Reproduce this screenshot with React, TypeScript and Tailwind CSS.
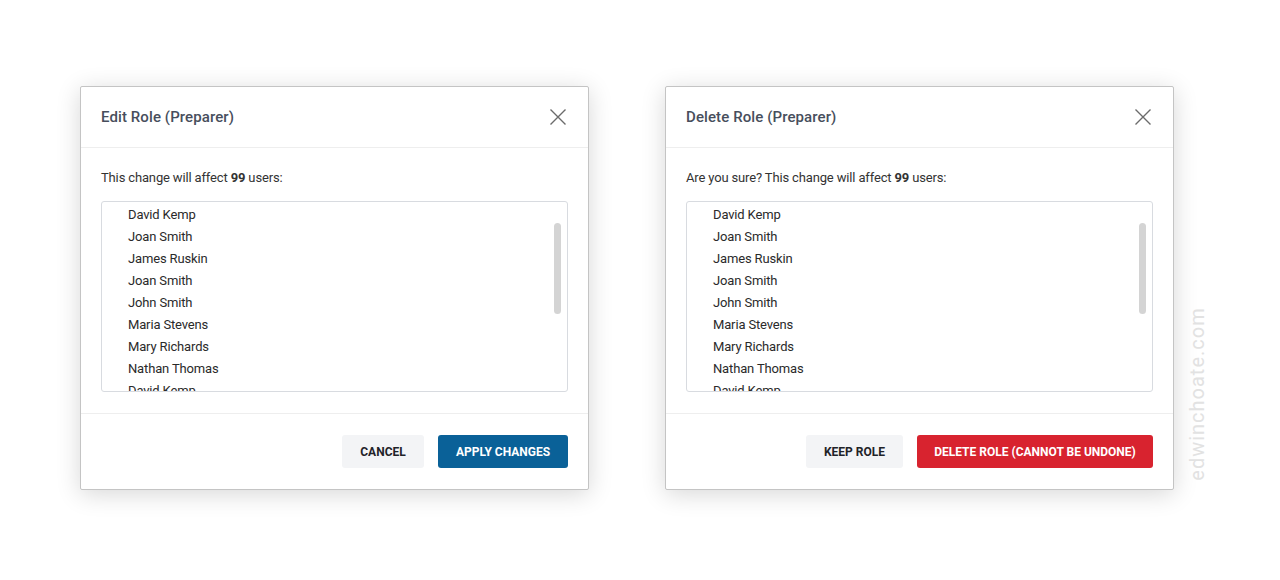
import React from "react";

const names = [
  "David Kemp",
  "Joan Smith",
  "James Ruskin",
  "Joan Smith",
  "John Smith",
  "Maria Stevens",
  "Mary Richards",
  "Nathan Thomas",
  "David Kemp",
];

function CloseIcon() {
  return (
    <svg width="18" height="18" viewBox="0 0 18 18" fill="none">
      <path d="M1.5 1.5 L16.5 16.5 M16.5 1.5 L1.5 16.5" stroke="#6b6b6b" strokeWidth="1.4" />
    </svg>
  );
}

function Dialog({
  title,
  prefix,
  secondary,
  primary,
  primaryClass,
  secondaryWidth,
  primaryWidth,
}: {
  title: string;
  prefix: string;
  secondary: string;
  primary: string;
  primaryClass: string;
  secondaryWidth: string;
  primaryWidth: string;
}) {
  return (
    <div className="w-[509px] h-[404px] bg-white border border-[#c4c4c4] rounded-[2px] shadow-[0_4px_24px_rgba(0,0,0,0.16)] flex flex-col">
      <div className="h-[61px] flex items-center justify-between pl-5 pr-[21px] border-b border-[#eeeeee]">
        <h2 className="text-[15px] font-medium text-[#474e5c] tracking-[0.1px]">{title}</h2>
        <CloseIcon />
      </div>
      <div className="px-5 pt-[21px] flex-1 border-b border-[#eeeeee]">
        <p className="text-[13px] text-[#333] leading-[17px] tracking-[-0.15px]">
          {prefix}
          <span className="font-bold">99</span> users:
        </p>
        <div className="relative mt-[15px] h-[191px] border border-[#d8dbe0] rounded-[3px] overflow-hidden">
          <ul className="pt-[2px] pl-[26px]">
            {names.map((n, i) => (
              <li key={i} className="h-[22px] leading-[22px] text-[13px] text-[#2a2a2a] tracking-[-0.15px]">
                {n}
              </li>
            ))}
          </ul>
          <div className="absolute right-[6px] top-[21px] w-[7px] h-[91px] rounded-full bg-[#d4d4d4]" />
        </div>
      </div>
      <div className="h-[75px] flex items-center justify-end gap-[14px] pr-5">
        <button className={`${secondaryWidth} h-[33px] rounded-[3px] bg-[#f3f4f6] text-[12px] font-bold text-[#1f2328]`}>
          {secondary}
        </button>
        <button className={`${primaryWidth} h-[33px] rounded-[3px] ${primaryClass} text-[12px] font-bold text-white`}>
          {primary}
        </button>
      </div>
    </div>
  );
}

export default function App() {
  return (
    <div
      className="w-[1280px] h-[580px] bg-white relative"
      style={{ fontFamily: "Roboto, 'Liberation Sans', sans-serif" }}
    >
      <div className="flex gap-[76px] pl-[80px] pt-[86px]">
        <Dialog
          title="Edit Role (Preparer)"
          prefix="This change will affect "
          secondary="CANCEL"
          primary="APPLY CHANGES"
          primaryClass="bg-[#0a6198]"
          secondaryWidth="w-[82px]"
          primaryWidth="w-[130px]"
        />
        <Dialog
          title="Delete Role (Preparer)"
          prefix="Are you sure? This change will affect "
          secondary="KEEP ROLE"
          primary="DELETE ROLE (CANNOT BE UNDONE)"
          primaryClass="bg-[#d8232f]"
          secondaryWidth="w-[97px]"
          primaryWidth="w-[236px]"
        />
      </div>
      <div className="absolute left-[1197px] top-[394px] -translate-x-1/2 -translate-y-1/2 -rotate-90 text-[20px] text-[#e2e2e2] tracking-[1px] whitespace-nowrap">
        edwinchoate.com
      </div>
    </div>
  );
}
